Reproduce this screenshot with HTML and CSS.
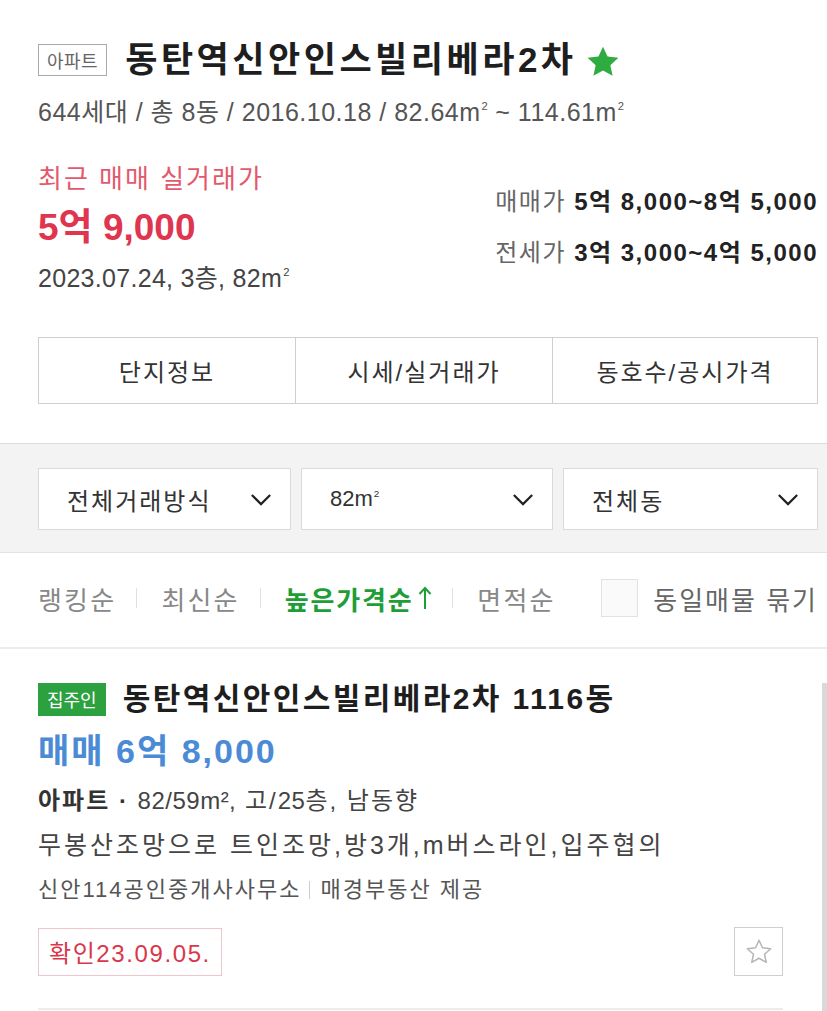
FILE: index.html
```html
<!DOCTYPE html>
<html lang="ko">
<head>
<meta charset="utf-8">
<title>동탄역신안인스빌리베라2차</title>
<link rel="stylesheet" href="styles.css">
</head>
<body>
<div class="page">
  <section class="summary">
    <div class="title-row">
      <span class="type-badge">아파트</span>
      <h1 class="complex-name">동탄역신안인스빌리베라2차</h1>
      <svg class="fav-star" viewBox="0 0 24 24" width="36" height="36" aria-hidden="true">
        <path d="M12 1.8l3.05 6.6 7.2.8-5.35 4.9 1.5 7.1L12 17.6l-6.4 3.6 1.5-7.1L1.75 9.2l7.2-.8z" fill="#2eac3f"/>
      </svg>
    </div>
    <p class="complex-meta">644세대 / 총 8동 / 2016.10.18 / 82.64m<sup>2</sup> ~ 114.61m<sup>2</sup></p>

    <div class="price-row">
      <div class="recent">
        <p class="recent-label">최근 매매 실거래가</p>
        <p class="recent-price">5억 9,000</p>
        <p class="recent-info">2023.07.24, 3층, 82m<sup>2</sup></p>
      </div>
      <div class="ranges">
        <p class="range"><span class="range-label">매매가</span> <b>5억 8,000~8억 5,000</b></p>
        <p class="range"><span class="range-label">전세가</span> <b>3억 3,000~4억 5,000</b></p>
      </div>
    </div>

    <nav class="tabs">
      <a class="tab">단지정보</a>
      <a class="tab">시세/실거래가</a>
      <a class="tab">동호수/공시가격</a>
    </nav>
  </section>

  <section class="filters">
    <div class="select"><span>전체거래방식</span><svg class="chev" viewBox="0 0 24 14" width="22" height="13"><path d="M2 2l10 10L22 2" fill="none" stroke="#222" stroke-width="2.4"/></svg></div>
    <div class="select"><span class="area">82m<sup>2</sup></span><svg class="chev" viewBox="0 0 24 14" width="22" height="13"><path d="M2 2l10 10L22 2" fill="none" stroke="#222" stroke-width="2.4"/></svg></div>
    <div class="select"><span>전체동</span><svg class="chev" viewBox="0 0 24 14" width="22" height="13"><path d="M2 2l10 10L22 2" fill="none" stroke="#222" stroke-width="2.4"/></svg></div>
  </section>

  <section class="sort-bar">
    <a class="sort">랭킹순</a>
    <span class="sep"></span>
    <a class="sort">최신순</a>
    <span class="sep"></span>
    <a class="sort active">높은가격순<svg class="arrow" viewBox="0 0 14 24" width="14" height="24"><path d="M7 23V2M1.5 8L7 2l5.5 6" fill="none" stroke="#1e9e36" stroke-width="2"/></svg></a>
    <span class="sep"></span>
    <a class="sort">면적순</a>
    <label class="group-check"><span class="box"></span>동일매물 묶기</label>
  </section>

  <article class="listing">
    <div class="listing-title">
      <span class="owner-badge">집주인</span>
      <h2 class="listing-name">동탄역신안인스빌리베라2차 1116동</h2>
    </div>
    <p class="listing-price">매매 6억 8,000</p>
    <p class="listing-spec"><b>아파트 ·</b> <span class="num">82/59m²,</span> 고/<span class="num">25</span>층, 남동향</p>
    <p class="listing-desc">무봉산조망으로 트인조망,방3개,m버스라인,입주협의</p>
    <p class="listing-agent">신안114공인중개사사무소<span class="agent-sep"></span>매경부동산 제공</p>
    <div class="listing-foot">
      <span class="confirm">확인23.09.05.</span>
      <button class="save" aria-label="관심">
        <svg viewBox="0 0 24 24" width="30" height="30"><path d="M12 2.6l2.75 6.05 6.6.7-4.95 4.45 1.4 6.5L12 17l-5.8 3.3 1.4-6.5L2.65 9.35l6.6-.7z" fill="none" stroke="#b5b5b5" stroke-width="1.2" stroke-linejoin="round"/></svg>
      </button>
    </div>
  </article>
  <div class="scrollbar"></div>
</div>
</body>
</html>
```

FILE: styles.css
```css
* { box-sizing: border-box; }
html, body { margin: 0; padding: 0; background: #fff; }
body {
  font-family: "Liberation Sans", "Noto Sans CJK KR", sans-serif;
  color: #333;
}
p, h1, h2 { margin: 0; font-weight: normal; }
sup { font-size: 0.45em; vertical-align: 0; position: relative; top: -0.95em; margin-left: 1px; letter-spacing: 0; }

.page { position: relative; width: 827px; height: 1011px; overflow: hidden; }

.summary { padding: 40px 9px 0 38px; }

.title-row { display: flex; align-items: center; height: 40px; }
.type-badge {
  display: inline-flex; align-items: center; justify-content: center;
  height: 32px; padding: 0 8px;
  border: 1px solid #a9a9a9; color: #666; font-size: 18px; letter-spacing: 0.5px;
  margin-right: 18px;
}
.complex-name { font-size: 35px; font-weight: bold; color: #1e1e1e; line-height: 40px; letter-spacing: 3.5px; }
.fav-star { margin-left: 8px; margin-top: 4px; }

.complex-meta { margin-top: 17px; font-size: 25px; line-height: 30px; color: #555; letter-spacing: 0.5px; }

.price-row { display: flex; justify-content: space-between; margin-top: 32px; }
.recent-label { font-size: 26px; line-height: 30px; color: #e2596d; letter-spacing: 2px; }
.recent-price { margin-top: 12px; font-size: 37px; line-height: 44px; font-weight: bold; color: #e0354f; }
.recent-info { margin-top: 13px; font-size: 25px; line-height: 30px; color: #444; letter-spacing: 0.3px; }

.ranges { padding-top: 23px; text-align: right; }
.range { font-size: 24px; line-height: 30px; color: #222; letter-spacing: 1.5px; }
.range + .range { margin-top: 21px; }
.range-label { color: #666; }

.tabs {
  display: grid; grid-template-columns: 256px 257px 1fr;
  margin-top: 39px; height: 67px;
  border: 1px solid #cfcfcf;
}
.tab {
  display: flex; align-items: center; justify-content: center;
  font-size: 24px; color: #333; letter-spacing: 2px;
}
.tab + .tab { border-left: 1px solid #cfcfcf; }

.filters {
  margin-top: 39px;
  border-top: 1px solid #dcdcdc; border-bottom: 1px solid #e2e2e2;
  background: #f3f3f3;
  padding: 24px 9px 22px 38px;
  display: grid; grid-template-columns: 253px 252px 1fr; column-gap: 10px;
}
.select {
  height: 62px; background: #fff; border: 1px solid #dadada;
  display: flex; align-items: center; justify-content: space-between;
  padding: 0 18px 0 28px;
  font-size: 24px; color: #333; letter-spacing: 2px;
}
.select .area { font-size: 22px; letter-spacing: 0; }

.sort-bar {
  height: 96px; padding: 0 9px 4px 38px;
  border-bottom: 2px solid #ececec;
  display: flex; align-items: center;
}
.sort { font-size: 26px; color: #888; letter-spacing: 2.2px; display: inline-flex; align-items: center; }
.sort.active { color: #1e9e36; font-weight: bold; letter-spacing: 1.8px; }
.arrow { margin-left: 5px; }
.sep { width: 1px; height: 20px; background: #e0e0e0; margin: 0 24px 0 20px; }
.group-check { margin-left: auto; display: flex; align-items: center; font-size: 26px; color: #666; letter-spacing: 2px; }
.box { width: 37px; height: 38px; border: 1px solid #e2e2e2; background: #fafafa; margin-right: 15px; }

.listing { padding: 32px 44px 0 38px; }
.listing-title { display: flex; align-items: center; height: 36px; }
.owner-badge {
  display: inline-flex; align-items: center; justify-content: center;
  height: 33px; padding: 0 9px; background: #2ca140; color: #fff; font-size: 18px;
  margin-right: 17px;
}
.listing-name { font-size: 30px; line-height: 36px; font-weight: bold; color: #1e1e1e; letter-spacing: 2.4px; }
.listing-price { margin-top: 14px; font-size: 34px; line-height: 40px; font-weight: bold; color: #4b8bd6; letter-spacing: 2px; }
.listing-spec { margin-top: 15px; font-size: 24px; line-height: 30px; color: #444; letter-spacing: 2px; }
.listing-spec .num { letter-spacing: 0.5px; }
.listing-spec b { color: #333; }
.listing-desc { margin-top: 14px; font-size: 25px; line-height: 30px; color: #444; letter-spacing: 3px; }
.listing-agent { margin-top: 17px; font-size: 22px; line-height: 26px; color: #555; display: flex; align-items: center; letter-spacing: 2px; }
.agent-sep { display: inline-block; width: 1px; height: 18px; background: #ccc; margin: 0 10px 0 8px; }

.listing-foot {
  margin-top: 24px; padding-bottom: 32px;
  display: flex; justify-content: space-between; align-items: center;
  border-bottom: 2px solid #ececec;
}
.confirm {
  display: inline-flex; align-items: center; height: 48px; padding: 0 10px;
  border: 1px solid #efc6cb; color: #d9374c; font-size: 24px; letter-spacing: 1.6px;
}
.save {
  width: 49px; height: 49px; padding: 0; background: #fff;
  border: 1px solid #cfcfcf; display: flex; align-items: center; justify-content: center;
}

.scrollbar {
  position: absolute; right: 0; top: 683px; width: 5px; bottom: 0;
  background: #d9d9d9;
}
```
